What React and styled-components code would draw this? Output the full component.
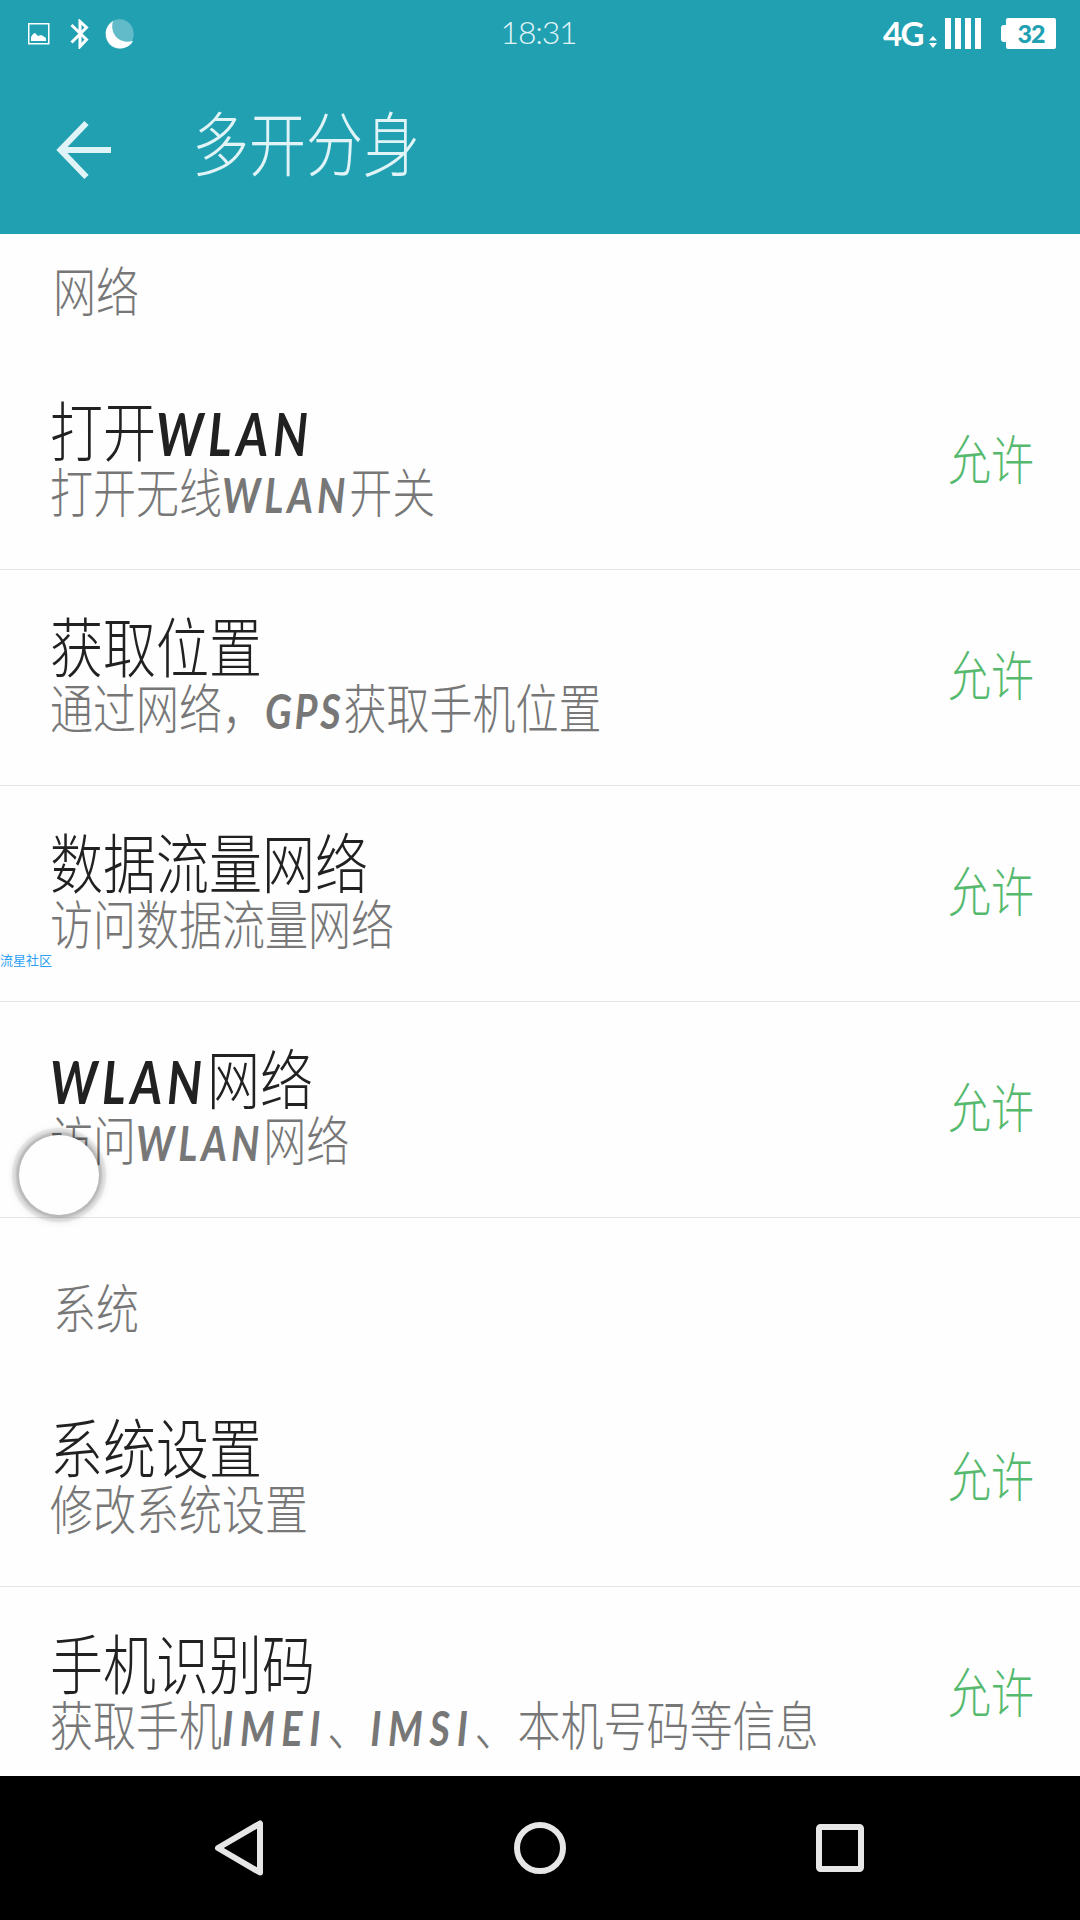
import React from 'react';
import styled, { createGlobalStyle } from 'styled-components';

const GlobalStyle = createGlobalStyle`
	* { box-sizing: border-box; }

	body {
		margin: 0;
		background: #fefefe;
		font-family: "Noto Sans CJK SC", sans-serif;
		font-weight: 300;
	}
`;

const Screen = styled.div`
	position: relative;
	width: 1080px;
	height: 1920px;
	overflow: hidden;

	display: flex;
	flex-direction: column;
	background: #fefefe;
`;

const Header = styled.header`
	height: 234px;
	flex-shrink: 0;
	background: #21a0b2;
	color: #e0f4f7;
`;

const StatusBar = styled.div`
	height: 67px;
	padding: 0 24px 0 28px;
	
	display: grid;
	grid-template-columns: 1fr auto 1fr;
	align-items: center;
`;

const StatusGroup = styled.div`
	display: flex;
	align-items: center;
	justify-content: ${(p) => (p.$end ? 'flex-end' : 'flex-start')};
	color: #fff;
`;

const StatusIcon = styled.svg`
	display: block;
	margin-right: ${(p) => p.$gap || 0}px;
`;

const Clock = styled.span`
	font-family: Lato, sans-serif;
	font-size: 32px;
	font-weight: 300;
	line-height: 36px;
	letter-spacing: -1.2px;
	padding: 0 7px 3px 0;
	color: #e0f4f7;
`;

const NetworkType = styled.span`
	font-family: Lato, sans-serif;
	font-size: 33px;
	font-weight: 700;
	line-height: 34px;
	letter-spacing: -1.5px;
	margin-right: 6px;
	padding-bottom: 2px;
`;

const Bars = styled.div`
	display: flex;
	gap: 4px;
	margin-right: 20px;
	
	i {
		width: 6px;
		height: 31px;
		background: #fff;
	}
`;

const Battery = styled.div`
	display: flex;
	align-items: center;
	
	&::before {
		content: '';
		width: 5px;
		height: 17px;
		border-radius: 3px 0 0 3px;
		background: #fff;
	}

	span {
		width: 50px;
		height: 31px;
		border-radius: 2px;
		background: #fff;
		color: #21a0b2;
		
		font-family: Lato, sans-serif;
		font-size: 25px;
		font-weight: 900;
		line-height: 30px;
		letter-spacing: -1px;
		text-align: center;
	}
`;

const TitleBar = styled.div`
	height: 167px;
	padding-left: 56px;
	
	display: flex;
	align-items: flex-start;
`;

const BackButton = styled.button`
	width: 136px;
	height: 60px;
	margin-top: 53px;
	padding: 0;
	border: 0;
	background: none;
	text-align: left;
	
	svg {
		display: block;
	}
`;

/* narrow tall glyphs, the line box keeps its own height */
const Line = styled.span`
	display: block;
	width: max-content;
	font-size: ${(p) => p.$size}px;
	line-height: ${(p) => p.$height}px;
	color: ${(p) => p.$color};
	white-space: nowrap;
	transform: scaleY(1.23);
`;

const PageTitle = styled(Line).attrs({ as: 'h1' })`
	margin: 39px 0 0;
	font-weight: 300;
`;

const Latin = styled.span`
	font-family: Lato, sans-serif;
	font-size: 0.92em;
	font-weight: 700;
	font-style: italic;
	line-height: 0;
	letter-spacing: ${(p) => p.$tracking}em;
`;

const List = styled.main`
	flex: 1;
	overflow: hidden;
`;

const SectionTitle = styled.div`
	height: ${(p) => p.$height}px;
	padding: 0 0 35px 53px;
	
	display: flex;
	align-items: flex-end;
`;

const Row = styled.div`
	height: 216px;
	padding: 42px 46px 0 50px;
	border-bottom: 1px solid #e6e6e6;
	
	display: flex;
	justify-content: space-between;
`;

const Permission = styled.div`
	display: flex;
	flex-direction: column;
`;

const State = styled.div`
	padding-top: 31px;
`;

const NavBar = styled.nav`
	height: 144px;
	padding-right: 2px;
	flex-shrink: 0;
	background: #000;
	
	display: flex;
	justify-content: center;
	align-items: center;
	gap: 250px;
`;

const Watermark = styled.div`
	position: absolute;
	left: 0;
	top: 950px;
	font-size: 13px;
	line-height: 20px;
	font-weight: 400;
	color: #2ba0f5;
`;

const FloatingBall = styled.div`
	position: absolute;
	left: 19px;
	top: 1135px;
	width: 80px;
	height: 80px;
	border-radius: 50%;
	background: #fefefe;
	box-shadow: 0 0 2px 3px rgba(0, 0, 0, 0.14), 0 0 2px 7px rgba(0, 0, 0, 0.09), 0 1px 7px 7px rgba(0, 0, 0, 0.07);
`;

// letter spacing per word, so every word keeps its own advance
const tracking = { WLAN: 0.1, GPS: 0.07, IMEI: 0.17, IMSI: 0.17 };

const sections = [
	{
		title: '网络',
		height: 120,
		items: [
			{ name: '打开WLAN', summary: '打开无线WLAN开关' },
			{ name: '获取位置', summary: '通过网络，GPS获取手机位置' },
			{ name: '数据流量网络', summary: '访问数据流量网络' },
			{ name: 'WLAN网络', summary: '访问WLAN网络' },
		],
	},
	{
		title: '系统',
		height: 153,
		items: [
			{ name: '系统设置', summary: '修改系统设置' },
			{ name: '手机识别码', summary: '获取手机IMEI、IMSI、本机号码等信息' },
		],
	},
];

function MixedText({ text }) {
	return text.split(/([A-Z]+)/).map((part, i) => (
		tracking[part] !== undefined ? <Latin key={i} $tracking={tracking[part]}>{part}</Latin> : part
	));
}

function StatusIcons() {
	return (
		<StatusGroup>
			<StatusIcon $gap={20} width="22" height="22" viewBox="0 0 22 22">
				<rect x="0.75" y="0.75" width="20" height="20" fill="none" stroke="#fff" strokeWidth="1.5" />
				<path d="M3 18v-4l2-3 2-1 3 3 3-1 2 1 3 2v3z" fill="#fff" />
			</StatusIcon>
			<StatusIcon $gap={16} width="19" height="30" viewBox="0 0 19 30">
				<path d="M1.5 6 16.5 20.5 10 27.5V2.5L16.5 8.5 1.5 23.5" fill="none" stroke="#fff" strokeWidth="3" />
			</StatusIcon>
			<StatusIcon width="29" height="30" viewBox="0 0 29 30">
				<ellipse cx="14.5" cy="15" rx="14.2" ry="14.7" fill="#62bbc8" />
				<path d="M8 2C-1 8-1 19 5 25.500C12 32 24 30 28 22C21 24 14 22 10 16.500C7 12 6.500 7 8 2z" fill="#fff" />
			</StatusIcon>
		</StatusGroup>
	);
}

export default function App() {
	return (
		<>
			<GlobalStyle />
			<Screen>
				<Header>
					<StatusBar>
						<StatusIcons />
						<Clock>18:31</Clock>
						<StatusGroup $end>
							<NetworkType>4G</NetworkType>
							<StatusIcon $gap={8} width="8" height="31" viewBox="0 0 8 31">
								<path d="M0 22.500 4 18l4 4.500zM0 25h8l-4 5z" fill="#fff" />
							</StatusIcon>
							<Bars><i /><i /><i /><i /></Bars>
							<Battery><span>32</span></Battery>
						</StatusGroup>
					</StatusBar>
					<TitleBar>
						<BackButton aria-label="返回">
							<svg width="56" height="60" viewBox="0 0 56 60">
								<path d="M30.500 3 4.500 30 30.500 57M4.500 30H55" fill="none" stroke="#e0f4f7" strokeWidth="6" />
							</svg>
						</BackButton>
						<PageTitle $size={57} $height={68} $color="#e0f4f7">多开分身</PageTitle>
					</TitleBar>
				</Header>
				<List>
					{ sections.map((section) => (
						<section key={section.title}>
							<SectionTitle $height={section.height}>
								<Line $size={43} $height={60} $color="#777">{section.title}</Line>
							</SectionTitle>
							{ section.items.map((item) => (
								<Row key={item.name}>
									<Permission>
										<Line $size={53} $height={65} $color="#212121"><MixedText text={item.name} /></Line>
										<Line $size={43} $height={58} $color="#777"><MixedText text={item.summary} /></Line>
									</Permission>
									<State>
										<Line $size={43} $height={60} $color="#55b96e">允许</Line>
									</State>
								</Row>
							))}
						</section>
					))}
				</List>
				<NavBar>
					<svg width="50" height="58" viewBox="0 0 50 58">
						<path d="M4 29 46 4.500v49z" fill="none" stroke="#e6e6e6" strokeWidth="6" strokeLinejoin="round" />
					</svg>
					<svg width="52" height="52" viewBox="0 0 52 52">
						<circle cx="26" cy="26" r="23" fill="none" stroke="#e6e6e6" strokeWidth="6" />
					</svg>
					<svg width="48" height="48" viewBox="0 0 48 48">
						<rect x="3" y="3" width="42" height="42" rx="1.500" fill="none" stroke="#e6e6e6" strokeWidth="6" strokeLinejoin="round" />
					</svg>
				</NavBar>
				<Watermark>流星社区</Watermark>
				<FloatingBall />
			</Screen>
		</>
	);
}
